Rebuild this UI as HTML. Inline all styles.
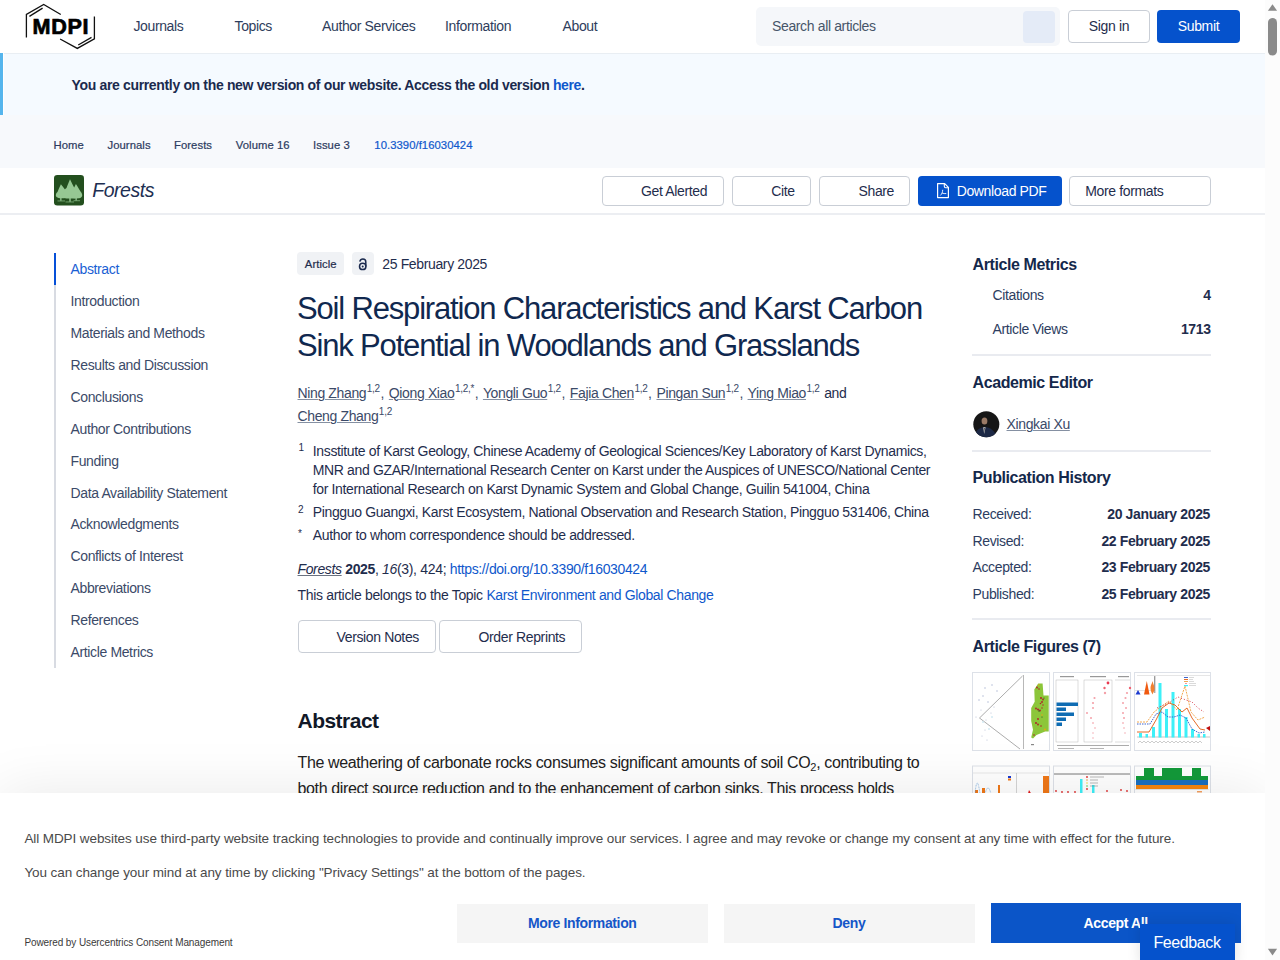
<!DOCTYPE html>
<html><head><meta charset="utf-8">
<style>
*{margin:0;padding:0;box-sizing:border-box;letter-spacing:calc(-0.023em - 0.04px)}
html,body{width:1280px;height:960px;overflow:hidden;background:#fff}
body{font-family:"Liberation Sans",sans-serif;color:#1f2d4d;position:relative}
.a{position:absolute;white-space:nowrap;line-height:1}
.btn{position:absolute;border:1px solid #c9ced6;border-radius:4px;background:#fff}
.blue{color:#0f58cc}
.ck{letter-spacing:-0.09px}
.bc{-webkit-text-stroke:0.2px currentColor;font-size:11.3px !important;letter-spacing:0.05px}
.au{text-decoration:underline;text-decoration-color:#8590a2;text-underline-offset:1.4px;text-decoration-thickness:1.2px}
.ul{text-decoration:underline;text-decoration-color:#6b7280;text-underline-offset:1px;text-decoration-thickness:1.3px}
sup{font-size:10px;vertical-align:0;position:relative;top:-5.5px;line-height:0;margin-left:0.5px}
.cm{margin:0 1.3px 0 0.6px}
sub{font-size:11px;vertical-align:0;position:relative;top:3px;line-height:0}
</style></head><body>

<!-- HEADER -->
<div class="a" style="left:0;top:0;width:1265px;height:53px;background:#fff"></div>
<svg class="a" style="left:22px;top:0" width="80" height="52" viewBox="0 0 80 52">
 <g stroke="#111" stroke-width="1.3" fill="none" stroke-linecap="butt">
  <polyline points="38.75,14.5 21.7,4.4 4.4,14.4 4.4,37.5"/>
  <line x1="7.4" y1="16.4" x2="20.6" y2="8.1"/>
  <polyline points="38.1,39 55.3,48.4 72.4,38.75 72.4,16.4"/>
  <line x1="56.25" y1="45" x2="69.5" y2="37.4"/>
 </g>
 <text x="10.6" y="34" font-family="Liberation Sans" font-weight="bold" font-size="21.6" fill="#000" stroke="#000" stroke-width="0.7" style="letter-spacing:0.65px">MDPI</text>
</svg>
<div class="a nav" style="left:133.4px;top:19px;font-size:14px;color:#2e3d5c">Journals</div>
<div class="a nav" style="left:234.5px;top:19px;font-size:14px;color:#2e3d5c">Topics</div>
<div class="a nav" style="left:322px;top:19px;font-size:14px;color:#2e3d5c">Author Services</div>
<div class="a nav" style="left:445px;top:19px;font-size:14px;color:#2e3d5c">Information</div>
<div class="a nav" style="left:562.5px;top:19px;font-size:14px;color:#2e3d5c">About</div>

<div class="a" style="left:756px;top:7px;width:304px;height:39px;background:#f5f7fa;border-radius:5px"></div>
<div class="a" style="left:772px;top:19px;font-size:14px;color:#475569">Search all articles</div>
<div class="a" style="left:1023px;top:11px;width:32px;height:32px;background:#e4ebf7;border-radius:4px"></div>
<div class="btn" style="left:1068px;top:10px;width:82px;height:33px"></div>
<div class="a" style="left:1068px;top:19px;width:82px;text-align:center;font-size:14px;color:#1f2d4d">Sign in</div>
<div class="a" style="left:1157px;top:10px;width:83px;height:33px;background:#0552cc;border-radius:4px"></div>
<div class="a" style="left:1157px;top:19px;width:83px;text-align:center;font-size:14px;color:#fff">Submit</div>

<!-- NOTICE BANNER -->
<div class="a" style="left:4px;top:53px;width:1261px;height:62px;background:#f5faff;border-top:1px solid #e9eef3"></div>
<div class="a" style="left:0;top:53px;width:3px;height:62px;background:#55b5ed"></div>
<div class="a" style="left:71.5px;top:78px;font-size:14px;font-weight:bold;color:#1b2a4e;letter-spacing:-0.34px">You are currently on the new version of our website. Access the old version <span class="blue">here</span>.</div>

<!-- BREADCRUMB -->
<div class="a" style="left:0;top:115px;width:1265px;height:53px;background:#f7f9fc"></div>
<div class="a bc" style="left:53.5px;top:139.6px;font-size:12px;color:#2c3b60">Home</div>
<div class="a bc" style="left:107.5px;top:139.6px;font-size:12px;color:#2c3b60">Journals</div>
<div class="a bc" style="left:174px;top:139.6px;font-size:12px;color:#2c3b60">Forests</div>
<div class="a bc" style="left:235.8px;top:139.6px;font-size:12px;color:#2c3b60">Volume 16</div>
<div class="a bc" style="left:313px;top:139.6px;font-size:12px;color:#2c3b60">Issue 3</div>
<div class="a bc" style="left:374.3px;top:139.6px;font-size:12px;color:#0f58cc">10.3390/f16030424</div>

<!-- JOURNAL BAR -->
<div class="a" style="left:0;top:213px;width:1265px;height:2px;background:#eceef2"></div>
<svg class="a" style="left:54px;top:175.3px" width="30" height="30.5" viewBox="0 0 30 30.5">
 <rect x="0" y="0" width="30" height="30.5" rx="3.3" fill="#234f1e"/>
 <g fill="#96c893">
  <path d="M6.9 9.3 C5.5 12 4.5 14.5 3.5 17 C2.2 18 1.6 19.5 1.9 21 C2.5 22.3 4 23.2 6 23.3 L10 23.3 C12 23 13 22 13.5 20 L12 16 C10 13.5 8.5 11 6.9 9.3 Z"/>
  <path d="M16 4.2 C14.5 7.5 13.5 10.5 12.5 13 C11 14 10 15.5 9.5 17 C8.7 18.5 8.5 20.5 9 22 C10 23.3 12 23.5 14 23.6 L19 23.6 C21.5 23.4 23 22.5 23.5 21 C23.8 19 23 16.5 21.5 14.8 C19.5 11.5 17.5 7.5 16 4.2 Z"/>
  <path d="M21.9 8.9 C20.5 11.5 19.5 14 18.5 16 C17.5 18 17.3 20.5 18 22.2 C19 23.2 20.5 23.5 22 23.4 L25 23.3 C27 23 28 21.8 28.2 20.5 C28.3 19 27.6 17.8 26.7 16.8 C25 14 23.5 11 21.9 8.9 Z"/>
  <rect x="6.2" y="22.5" width="1.3" height="3.2"/>
  <rect x="15.3" y="22.5" width="1.4" height="4.2"/>
  <rect x="21.5" y="22.5" width="1.3" height="3"/>
  <rect x="3.5" y="25.5" width="7.5" height="0.9" opacity=".75"/>
  <rect x="11.5" y="26.5" width="8.5" height="0.9" opacity=".75"/>
  <rect x="19.5" y="25.3" width="6.5" height="0.9" opacity=".75"/>
 </g>
</svg>
<div class="a" style="left:92.3px;top:180.5px;font-size:19.5px;font-style:italic;color:#1e2f52">Forests</div>

<div class="btn" style="left:601.5px;top:175.5px;width:122px;height:30px"></div>
<div class="a" style="left:641px;top:184px;font-size:14px;color:#1f2d4d">Get Alerted</div>
<div class="btn" style="left:731.5px;top:175.5px;width:79px;height:30px"></div>
<div class="a" style="left:771.3px;top:184px;font-size:14px;color:#1f2d4d">Cite</div>
<div class="btn" style="left:818.5px;top:175.5px;width:91px;height:30px"></div>
<div class="a" style="left:858.5px;top:184px;font-size:14px;color:#1f2d4d">Share</div>
<div class="a" style="left:917.5px;top:175.5px;width:144px;height:30px;background:#0552cc;border-radius:4px"></div>
<svg class="a" style="left:936px;top:182px" width="14" height="17" viewBox="0 0 14 17">
 <path d="M1.6 1.6 H8.7 L12.4 5.3 V15.6 H1.6 Z" fill="none" stroke="#fff" stroke-width="1.2" stroke-linejoin="round"/>
 <path d="M8.3 1.8 V4.3 Q8.3 5.7 9.7 5.7 H12.3" fill="none" stroke="#fff" stroke-width="1.1"/>
 <path d="M6.7 8.2 C6.6 10.4 5.9 11.9 4.6 13.2 M6.5 11.2 C7.6 11.6 8.6 11.7 9.9 11.6" fill="none" stroke="#fff" stroke-width="0.9" stroke-linecap="round"/>
</svg>
<div class="a" style="left:956.7px;top:184px;font-size:14px;color:#fff">Download PDF</div>
<div class="btn" style="left:1069px;top:175.5px;width:142px;height:30px"></div>
<div class="a" style="left:1085.3px;top:184px;font-size:14px;color:#1f2d4d">More formats</div>

<!-- TOC -->
<div class="a" style="left:54px;top:252.8px;width:1.6px;height:415px;background:#d8dbe2"></div>
<div class="a" style="left:54px;top:252.8px;width:1.6px;height:32px;background:#0650d8"></div>
<div class="a" style="left:70.5px;top:262.05px;font-size:14px;color:#1a5fd4">Abstract</div>
<div class="a" style="left:70.5px;top:293.98px;font-size:14px;color:#3b4a68">Introduction</div>
<div class="a" style="left:70.5px;top:325.91px;font-size:14px;color:#3b4a68">Materials and Methods</div>
<div class="a" style="left:70.5px;top:357.84px;font-size:14px;color:#3b4a68">Results and Discussion</div>
<div class="a" style="left:70.5px;top:389.77px;font-size:14px;color:#3b4a68">Conclusions</div>
<div class="a" style="left:70.5px;top:421.70px;font-size:14px;color:#3b4a68">Author Contributions</div>
<div class="a" style="left:70.5px;top:453.63px;font-size:14px;color:#3b4a68">Funding</div>
<div class="a" style="left:70.5px;top:485.56px;font-size:14px;color:#3b4a68">Data Availability Statement</div>
<div class="a" style="left:70.5px;top:517.49px;font-size:14px;color:#3b4a68">Acknowledgments</div>
<div class="a" style="left:70.5px;top:549.42px;font-size:14px;color:#3b4a68">Conflicts of Interest</div>
<div class="a" style="left:70.5px;top:581.35px;font-size:14px;color:#3b4a68">Abbreviations</div>
<div class="a" style="left:70.5px;top:613.28px;font-size:14px;color:#3b4a68">References</div>
<div class="a" style="left:70.5px;top:645.21px;font-size:14px;color:#3b4a68">Article Metrics</div>

<!-- ARTICLE HEADER -->
<div class="a" style="left:297.2px;top:252.4px;width:46.8px;height:23px;background:#f0f2f5;border-radius:4px"></div>
<div class="a bc" style="left:297.2px;top:258.6px;width:47px;text-align:center;font-size:12px;color:#1f2d4d">Article</div>
<div class="a" style="left:352px;top:252.3px;width:22px;height:23px;background:#f0f2f5;border-radius:4px"></div>
<svg class="a" style="left:352px;top:252.5px" width="22" height="23" viewBox="0 0 22 23">
 <g fill="none" stroke="#1b2a4e" stroke-width="1.5">
  <circle cx="10.7" cy="13.4" r="3.2"/>
  <path d="M7.8 8.6 C8.3 6.6 9.6 6 10.9 6 C12.6 6 13.8 7.2 13.8 9 V13.4"/>
 </g>
 <circle cx="10.7" cy="13.4" r="1" fill="#1b2a4e"/>
</svg>
<div class="a" style="left:382.3px;top:257px;font-size:14px;color:#1f2d4d">25 February 2025</div>

<div class="a" style="left:297px;top:290.9px;font-size:31px;line-height:36.8px;color:#10284f;letter-spacing:-1.17px;white-space:normal;width:660px">Soil Respiration Characteristics and Karst Carbon<br>Sink Potential in Woodlands and Grasslands</div>

<div class="a authors" style="left:297.5px;top:381.5px;font-size:14px;line-height:23px;color:#3b4a68;white-space:normal;width:660px"><span class="au">Ning Zhang</span><sup>1,2</sup><span class="cm">,</span> <span class="au">Qiong Xiao</span><sup>1,2,*</sup><span class="cm">,</span> <span class="au">Yongli Guo</span><sup>1,2</sup><span class="cm">,</span> <span class="au">Fajia Chen</span><sup>1,2</sup><span class="cm">,</span> <span class="au">Pingan Sun</span><sup>1,2</sup><span class="cm">,</span> <span class="au">Ying Miao</span><sup>1,2</sup> <span style="color:#1f2d4d;margin-left:1px">and</span><br><span class="au">Cheng Zhang</span><sup>1,2</sup></div>

<div class="a" style="left:298.5px;top:443px;font-size:10px;color:#1f2d4d">1</div>
<div class="a" style="left:312.8px;top:441.7px;font-size:14px;line-height:19px;color:#1f2d4d;white-space:normal;width:640px">Insstitute of Karst Geology, Chinese Academy of Geological Sciences/Key Laboratory of Karst Dynamics,<br>MNR and GZAR/International Research Center on Karst under the Auspices of UNESCO/National Center<br>for International Research on Karst Dynamic System and Global Change, Guilin 541004, China</div>
<div class="a" style="left:298px;top:504.5px;font-size:10px;color:#1f2d4d">2</div>
<div class="a" style="left:312.8px;top:502.5px;font-size:14px;line-height:18.9px;color:#1f2d4d">Pingguo Guangxi, Karst Ecosystem, National Observation and Research Station, Pingguo 531406, China</div>
<div class="a" style="left:298px;top:528.5px;font-size:10px;color:#1f2d4d">*</div>
<div class="a" style="left:312.8px;top:526px;font-size:14px;line-height:18.9px;color:#1f2d4d">Author to whom correspondence should be addressed.</div>

<div class="a" style="left:297.5px;top:561.9px;font-size:14px;color:#1f2d4d;letter-spacing:-0.32px"><i class="ul">Forests</i> <b>2025</b>, <i>16</i>(3), 424; <span class="blue">https://doi.org/10.3390/f16030424</span></div>
<div class="a" style="left:297.5px;top:587.5px;font-size:14px;color:#1f2d4d;letter-spacing:-0.32px">This article belongs to the Topic <span class="blue">Karst Environment and Global Change</span></div>

<div class="btn" style="left:297.5px;top:620.3px;width:138px;height:32.3px"></div>
<div class="a" style="left:336.5px;top:629.6px;font-size:14px;color:#1f2d4d">Version Notes</div>
<div class="btn" style="left:439px;top:620.3px;width:142.5px;height:32.3px"></div>
<div class="a" style="left:478.5px;top:629.6px;font-size:14px;color:#1f2d4d">Order Reprints</div>

<div class="a" style="left:297.5px;top:710px;font-size:21px;font-weight:bold;color:#111827">Abstract</div>
<div class="a" style="left:297.5px;top:750.3px;font-size:16px;line-height:25.6px;color:#222;letter-spacing:-0.37px;white-space:normal;width:640px">The weathering of carbonate rocks consumes significant amounts of soil CO<sub>2</sub>, contributing to<br>both direct source reduction and to the enhancement of carbon sinks. This process holds</div>

<!-- RIGHT SIDEBAR -->
<div class="a" style="left:972.5px;top:256.5px;font-size:16px;font-weight:bold;color:#14284b">Article Metrics</div>
<div class="a" style="left:992.5px;top:288px;font-size:14px;color:#2d3d5f">Citations</div>
<div class="a" style="left:1011px;top:288px;width:199.6px;text-align:right;font-size:14px;font-weight:bold;color:#1f2d4d">4</div>
<div class="a" style="left:992.5px;top:321.6px;font-size:14px;color:#2d3d5f">Article Views</div>
<div class="a" style="left:1011px;top:321.6px;width:199.6px;text-align:right;font-size:14px;font-weight:bold;color:#1f2d4d">1713</div>
<div class="a" style="left:972px;top:354px;width:239px;height:2px;background:#e9ebf0"></div>
<div class="a" style="left:972.5px;top:374.5px;font-size:16px;font-weight:bold;color:#14284b">Academic Editor</div>
<svg class="a" style="left:972.5px;top:410.5px" width="27" height="27" viewBox="0 0 27 27">
 <defs><clipPath id="cc"><circle cx="13.3" cy="13.3" r="13"/></clipPath></defs>
 <g clip-path="url(#cc)">
  <rect width="27" height="27" fill="#161616"/>
  <ellipse cx="11.5" cy="10" rx="2.9" ry="3.6" fill="#9a7a66"/>
  <path d="M1 27 C2 20 6 16.5 11.5 16 C17 16.5 22 19 24 27 Z" fill="#1c2845"/>
  <path d="M10.2 16.2 L11.2 23 L12.6 16.2 Z" fill="#cfcfcf"/>
  <path d="M11 17 L11.2 22 L11.8 17 Z" fill="#333"/>
 </g>
</svg>
<div class="a" style="left:1006.5px;top:417.2px;font-size:14px;color:#3b4a68"><span class="au">Xingkai Xu</span></div>
<div class="a" style="left:972px;top:450px;width:239px;height:2px;background:#e9ebf0"></div>
<div class="a" style="left:972.5px;top:470.3px;font-size:16px;font-weight:bold;color:#14284b">Publication History</div>
<div class="a" style="left:972.5px;top:506.90px;font-size:14px;color:#2d3d5f">Received:</div>
<div class="a" style="left:1011px;top:506.90px;width:199px;text-align:right;font-size:14px;font-weight:bold;color:#1f2d4d">20 January 2025</div>
<div class="a" style="left:972.5px;top:533.50px;font-size:14px;color:#2d3d5f">Revised:</div>
<div class="a" style="left:1011px;top:533.50px;width:199px;text-align:right;font-size:14px;font-weight:bold;color:#1f2d4d">22 February 2025</div>
<div class="a" style="left:972.5px;top:560.10px;font-size:14px;color:#2d3d5f">Accepted:</div>
<div class="a" style="left:1011px;top:560.10px;width:199px;text-align:right;font-size:14px;font-weight:bold;color:#1f2d4d">23 February 2025</div>
<div class="a" style="left:972.5px;top:586.70px;font-size:14px;color:#2d3d5f">Published:</div>
<div class="a" style="left:1011px;top:586.70px;width:199px;text-align:right;font-size:14px;font-weight:bold;color:#1f2d4d">25 February 2025</div>
<div class="a" style="left:972px;top:618px;width:239px;height:2px;background:#e9ebf0"></div>
<div class="a" style="left:972.5px;top:638.7px;font-size:16px;font-weight:bold;color:#14284b">Article Figures (7)</div>

<svg class="a" style="left:972px;top:671.5px" width="240" height="125" viewBox="0 0 240 125">
 <g fill="#fff" stroke="#dde1e8" stroke-width="1">
  <rect x="0.5" y="0.5" width="77" height="78"/>
  <rect x="81.5" y="0.5" width="77" height="78"/>
  <rect x="162.5" y="0.5" width="76" height="78"/>
  <rect x="0.5" y="94" width="77" height="40"/>
  <rect x="81.5" y="94" width="77" height="40"/>
  <rect x="162.5" y="94" width="76" height="40"/>
 </g>
 <!-- fig1 map -->
 <g stroke="#666" stroke-width="0.55" fill="none">
  <path d="M7.5 46 L50.5 4 M7.5 46 L48 77"/>
  <path d="M51.5 3 V77" stroke="#999" stroke-width="0.7"/>
 </g>
 <g fill="#9aa6c8" opacity="0.7">
  <circle cx="13" cy="16" r="0.8"/><circle cx="20" cy="13" r="0.8"/><circle cx="25" cy="19" r="0.8"/><circle cx="11" cy="24" r="0.8"/><circle cx="7" cy="28" r="0.8"/><circle cx="16" cy="30" r="0.8"/><circle cx="22" cy="35" r="0.6"/><circle cx="9" cy="38" r="0.6"/><circle cx="4" cy="45" r="0.6"/><circle cx="14" cy="48" r="0.6"/><circle cx="19" cy="41" r="0.6"/><circle cx="13" cy="58" r="0.6"/><circle cx="10" cy="64" r="0.6"/><circle cx="15" cy="68" r="0.6"/>
 </g>
 <g fill="#c8e6f0" opacity="0.8"><circle cx="20" cy="45" r="1"/><circle cx="17" cy="57" r="1"/><circle cx="11" cy="50" r="1"/></g>
 <path d="M66.2 11.4 L70.6 11.4 L71.5 23.6 L76.7 23.6 L76.7 59.5 L73.2 59.5 L64.5 63 L61 66.5 L59.2 65.6 L61 57.7 L59.2 49 L59.2 35.9 L62.7 29.7 L62.3 17.5 Z" fill="#8cc63a"/>
 <g fill="#b2202a">
  <circle cx="65" cy="15.5" r="0.9"/><circle cx="67" cy="17" r="0.8"/><circle cx="69" cy="26" r="1"/><circle cx="71" cy="27.5" r="0.9"/><circle cx="70" cy="30" r="0.9"/><circle cx="68.5" cy="31.5" r="0.8"/><circle cx="64" cy="36.5" r="0.9"/><circle cx="66" cy="37.5" r="1"/><circle cx="68" cy="38.5" r="0.9"/><circle cx="70" cy="36" r="0.7"/><circle cx="66" cy="47" r="0.9"/><circle cx="64" cy="51" r="1"/><circle cx="66" cy="52.5" r="0.9"/><circle cx="69" cy="54" r="0.8"/><circle cx="62" cy="63" r="0.8"/><circle cx="71" cy="33" r="0.7"/>
 </g>
 <g fill="#f5a010"><circle cx="73" cy="57.5" r="0.9"/><circle cx="70" cy="43" r="0.7"/><circle cx="67" cy="13" r="0.7"/></g>
 <g fill="#2a5020"><circle cx="67" cy="39" r="0.7"/><circle cx="72" cy="26" r="0.6"/><circle cx="70" cy="45" r="0.6"/></g>
 <g fill="#555" opacity=".7"><rect x="59" y="72" width="3" height="1.2"/></g>
 <!-- fig2 bars -->
 <g fill="none" stroke="#aaa" stroke-width="0.4">
  <rect x="84" y="8" width="22" height="62"/>
  <rect x="112" y="8" width="28" height="62"/>
  <path d="M143 8 H158 M143 70 H158"/>
 </g>
 <g fill="#333" opacity="0.5"><rect x="88" y="4" width="14" height="1.2"/><rect x="118" y="4" width="16" height="1.2"/><rect x="146" y="4" width="11" height="1.2"/>
  <rect x="85" y="73" width="72" height="0.8"/><rect x="86" y="76" width="16" height="0.7"/><rect x="118" y="76" width="14" height="0.7"/></g>
 <g fill="#0f6cb3">
  <rect x="84.5" y="30.5" width="21.5" height="3.5"/><rect x="84.5" y="35.5" width="9.5" height="3.5"/><rect x="84.5" y="40.5" width="17.5" height="3.5"/><rect x="84.5" y="45.5" width="9.5" height="3.5"/><rect x="84.5" y="50.5" width="5.5" height="3.5"/>
 </g>
 <g fill="#f4a0a8">
  <circle cx="136" cy="11" r="1.4" fill="#e83850"/><circle cx="132.5" cy="16" r="1.2" fill="#ee6070"/><circle cx="133" cy="21" r="1.2"/><circle cx="122.5" cy="26" r="1.1"/><circle cx="121" cy="31" r="1.1"/><circle cx="121" cy="36" r="1"/><circle cx="115" cy="41" r="1"/><circle cx="119" cy="46" r="1"/><circle cx="121" cy="51" r="1" opacity=".7"/><circle cx="123" cy="56" r="1" opacity=".6"/><circle cx="121" cy="61" r="1" opacity=".5"/><circle cx="121" cy="66" r="1" opacity=".5"/>
  <circle cx="158" cy="16" r="1.2" fill="#ee6070"/><circle cx="155" cy="21" r="1.1"/><circle cx="153.5" cy="26" r="1.1"/><circle cx="151" cy="31" r="1"/><circle cx="154" cy="36" r="1"/><circle cx="151" cy="41" r="1"/><circle cx="152" cy="46" r="1"/><circle cx="151" cy="51" r="1" opacity=".7"/><circle cx="152" cy="56" r="1" opacity=".6"/><circle cx="153" cy="61" r="1" opacity=".5"/>
 </g>
 <!-- fig3 line chart -->
 <path d="M165 3.5 H238" stroke="#ccc" stroke-width="0.5"/>
 <path d="M165 65 H238" stroke="#888" stroke-width="0.5"/>
 <g fill="#3ef0f8">
  <rect x="167" y="61" width="3" height="4.5"/><rect x="173.5" y="62" width="2.5" height="3.5"/><rect x="180" y="55" width="3" height="10.5"/><rect x="186.5" y="11" width="3" height="54.5"/><rect x="193" y="37" width="3" height="28.5"/><rect x="199.5" y="20" width="3" height="45.5"/><rect x="206" y="37" width="3" height="28.5"/><rect x="212.5" y="45" width="3" height="20.5"/><rect x="219" y="57" width="3" height="8.5"/><rect x="225.5" y="62" width="2.5" height="3.5"/><rect x="231" y="62" width="2.5" height="3.5"/>
 </g>
 <g fill="none" stroke-width="0.9">
  <path d="M165 52 L178 52 L184 42 L190 40 L196 45 L202 45 L208 43 L214 46 L220 57 L227 61 L233 60" stroke="#2b56c8" stroke-dasharray="1.5 1"/>
  <path d="M165 60 L177 60 L184 48 L190 36 L197 31 L203 33 L210 40 L215 36 L220 46 L228 57 L233 58" stroke="#e05a10"/>
  <path d="M165 50 L175 50 L182 40 L190 34 L197 29 L205 38 L213 14 L219 40 L226 48 L233 45" stroke="#f0a040" stroke-dasharray="2 1"/>
  <path d="M185 36 L192 33 L198 30 L206 25 L214 28 L220 30 L226 36 L232 40" stroke="#d02030" stroke-dasharray="1 2"/>
 </g>
 <path d="M163 18.5 H182.5 V4.5" stroke="#bbb" stroke-width="0.4" fill="none"/>
 <path d="M182.8 4 V21" stroke="#333" stroke-width="0.6"/>
 <path d="M163.5 22.5 L166 18 L168.5 22.5 Z" fill="#1c3ad0"/>
 <path d="M172 22.5 L174.8 9 L177.5 22.5 Z" fill="#f05a10"/>
 <path d="M178.5 16 C178.5 13 180 12 180.5 9 C181 12 182.5 13.5 182.5 16.5 C182.5 19.5 181 21 180.5 22.5 C180 21 178.5 19.5 178.5 16 Z" fill="#f08030"/>
 <g fill="#2b56c8"><rect x="212" y="5" width="4" height="0.9"/></g><g fill="#e05a10"><rect x="212" y="7" width="4" height="0.9"/></g><g fill="#f0a040"><rect x="212" y="9" width="4" height="0.9"/></g><g fill="#d02030"><circle cx="214" cy="11.5" r="0.6"/></g><g fill="#3ef0f8"><rect x="212" y="13" width="4" height="1.2"/></g>
 <g fill="#999" opacity=".6"><rect x="217" y="5" width="5" height="0.6"/><rect x="217" y="7" width="4" height="0.6"/><rect x="217" y="9" width="5" height="0.6"/><rect x="217" y="11" width="7" height="0.6"/><rect x="217" y="13" width="7" height="0.6"/></g>
 <path d="M234 56 L238 54 L238 59 Z" fill="#c01010"/>
 <g stroke="#666" stroke-width="0.6" opacity=".55"><path d="M166 71 l2 -2 l2 2 l2 -2 l2 2 l2 -2 l2 2 l2 -2 l2 2 l2 -2 l2 2 l2 -2 l2 2 l2 -2 l2 2 l2 -2 l2 2 l2 -2 l2 2 l2 -2 l2 2 l2 -2 l2 2 l2 -2 l2 2 l2 -2 l2 2 l2 -2 l2 2 l2 -2 l2 2 l2 -2 l2 2" fill="none"/></g>
 <!-- row2 fig4 -->
 <path d="M1 101 H77" stroke="#ccc" stroke-width="0.5"/>
 <path d="M44.5 101 V125" stroke="#aaa" stroke-width="0.5"/>
 <g fill="#f07818"><rect x="3" y="118" width="3" height="7"/><rect x="10" y="116" width="3" height="9"/><rect x="26" y="113" width="2" height="12"/><rect x="71" y="104" width="6" height="21"/></g>
 <path d="M3 122 Q5 100 8 122 M13 122 Q16 110 19 122" stroke="#5a9ad8" stroke-width="0.6" fill="none" stroke-dasharray="1 0.6"/>
 <g fill="#1a3ad0"><rect x="36" y="104" width="3" height="2"/></g><g fill="#f07818"><rect x="36" y="106.5" width="3" height="2"/></g>
 <path d="M55 125 L57 118 L60 123 L63 125 Z" fill="#e01818"/>
 <!-- fig5 -->
 <path d="M82 102 H158" stroke="#555" stroke-width="0.8"/>
 <g fill="#3ef0f8"><rect x="108" y="107" width="2.5" height="18"/><rect x="120" y="113" width="2.5" height="12"/></g>
 <g fill="#e03030"><circle cx="115" cy="105" r="0.9"/><circle cx="84" cy="119" r="0.9"/><circle cx="90" cy="120" r="0.9"/><circle cx="96" cy="120" r="0.9"/><circle cx="103" cy="120" r="0.9"/><circle cx="115" cy="117" r="0.9"/><circle cx="135" cy="119" r="0.9"/><circle cx="149" cy="118" r="0.9"/><circle cx="155" cy="119" r="0.9"/></g>
 <g fill="#f0a040"><circle cx="115" cy="108" r="0.8"/></g><g fill="#f0e040"><circle cx="115" cy="111" r="0.8"/></g><g fill="#50d050"><circle cx="115" cy="114" r="0.8"/></g>
 <g fill="#777" opacity=".5"><rect x="118" y="104.5" width="14" height="1"/><rect x="118" y="107.5" width="8" height="1"/><rect x="118" y="110.5" width="8" height="1"/><rect x="118" y="113.5" width="8" height="1"/></g>
 <!-- fig6 -->
 <g>
  <rect x="163" y="101" width="75" height="2" fill="#fff"/>
  <rect x="164" y="104" width="8" height="4" fill="#139a3a"/><rect x="172" y="96" width="10" height="12" fill="#139a3a"/><rect x="182" y="104" width="8" height="4" fill="#139a3a"/><rect x="190" y="96" width="20" height="12" fill="#139a3a"/><rect x="210" y="104" width="10" height="4" fill="#139a3a"/><rect x="220" y="96" width="9" height="12" fill="#139a3a"/><rect x="229" y="104" width="7" height="4" fill="#139a3a"/>
  <rect x="164" y="108" width="72" height="5" fill="#1a6fc0"/>
  <rect x="164" y="113" width="72" height="4" fill="#f5850f"/>
  <rect x="163.5" y="117" width="73" height="0.8" fill="#ddd"/>
  <rect x="225" y="119" width="5" height="1.5" fill="#f5a060"/><rect x="225" y="121" width="5" height="1.5" fill="#5a9ad8"/><rect x="225" y="123" width="5" height="1.5" fill="#50b060"/>
 </g>
</svg>


<!-- COOKIE BANNER -->
<div class="a" style="left:0;top:793px;width:1265px;height:167px;background:#fff;box-shadow:0 0 55px rgba(0,0,0,0.09)"></div>
<div class="a ck" style="left:24.4px;top:831.8px;font-size:13.5px;color:#4a4a4a">All MDPI websites use third-party website tracking technologies to provide and continually improve our services. I agree and may revoke or change my consent at any time with effect for the future.</div>
<div class="a ck" style="left:24.4px;top:866px;font-size:13.5px;color:#4a4a4a">You can change your mind at any time by clicking "Privacy Settings" at the bottom of the pages.</div>
<div class="a ck" style="left:24.4px;top:937.8px;font-size:10px;color:#3a3a3a;letter-spacing:-0.1px">Powered by Usercentrics Consent Management</div>
<div class="a" style="left:457px;top:903.5px;width:250.5px;height:39.5px;background:#f5f5f5"></div>
<div class="a" style="left:457px;top:916px;width:250.5px;text-align:center;font-size:14px;font-weight:bold;color:#1556c8">More Information</div>
<div class="a" style="left:723.5px;top:903.5px;width:251px;height:39.5px;background:#f5f5f5"></div>
<div class="a" style="left:723.5px;top:916px;width:251px;text-align:center;font-size:14px;font-weight:bold;color:#1556c8">Deny</div>
<div class="a" style="left:990.5px;top:903px;width:250.5px;height:40px;background:#0b55c8"></div>
<div class="a" style="left:990.5px;top:916px;width:250.5px;text-align:center;font-size:14px;font-weight:bold;color:#fff">Accept All</div>
<div class="a" style="left:1140px;top:923.8px;width:94.5px;height:40px;background:#0552cc;box-shadow:0 0 14px rgba(0,0,0,0.12)"></div>
<div class="a" style="left:1153.5px;top:935px;font-size:16px;color:#fff">Feedback</div>
<!-- CONTENT PLACEHOLDER -->

<!-- SCROLLBAR -->
<div class="a" style="left:1265px;top:0;width:15px;height:960px;background:#fcfcfc"></div>
<svg class="a" style="left:1265px;top:0" width="15" height="960">
 <path d="M2.9 10.8 L7.5 4.2 L12.1 10.8 Z" fill="#8a8a8a"/>
 <rect x="3" y="18" width="9" height="37.5" rx="4.5" fill="#8a8a8a"/>
 <path d="M2.9 948.8 L12.1 948.8 L7.5 955.4 Z" fill="#8a8a8a"/>
</svg>
</body></html>
